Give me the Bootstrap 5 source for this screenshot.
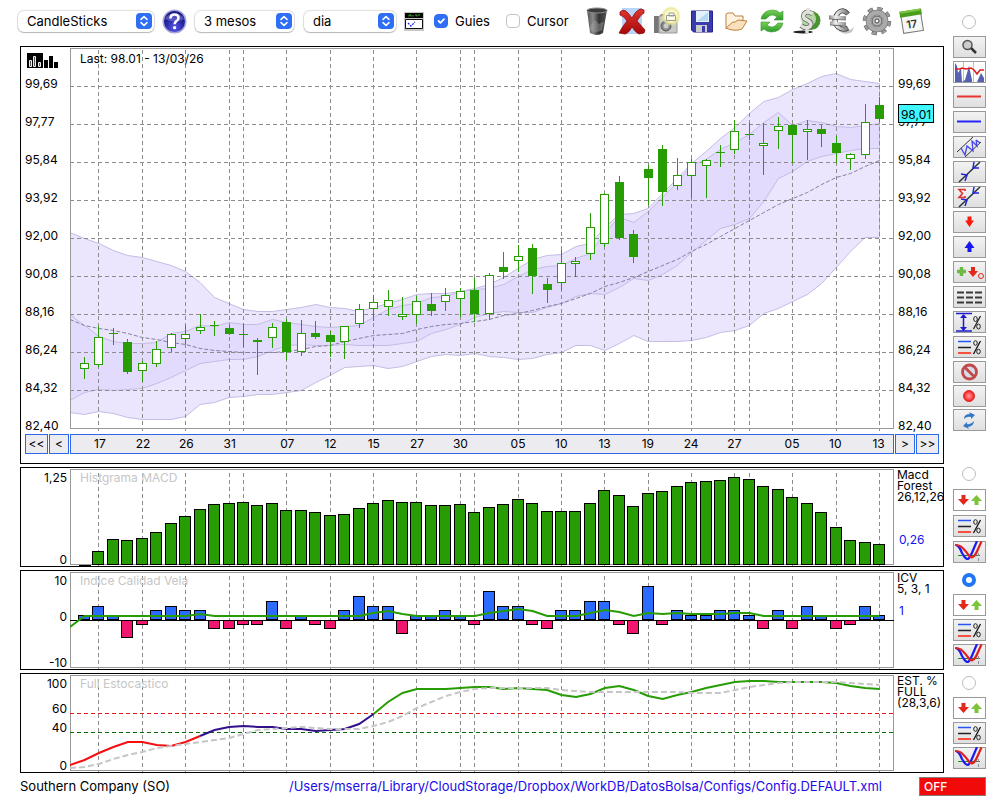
<!DOCTYPE html>
<html lang="ca">
<head>
<meta charset="utf-8">
<meta name="viewport" content="width=device-width, initial-scale=1">
<title>Southern Company (SO)</title>
<link href="https://cdn.jsdelivr.net/npm/bootstrap@5.3.0/dist/css/bootstrap.min.css" rel="stylesheet">
<style>
body{font-family:Inter,"Liberation Sans",sans-serif;font-size:12px;line-height:12px;color:#000;background:#fff}
.workspace{padding-left:20px}
.charts{gap:3px;min-width:0}
.toolbar{height:46px;padding-bottom:4px;margin-left:-2px;font-size:13px}
.picker{height:21px;padding:0 26px 0 9px;font-size:13px;line-height:16px;font-weight:400;color:#000;border:0;border-radius:6px;flex:none;
 box-shadow:0 0 1px 1px rgba(0,0,0,.13),0 1px 1px rgba(0,0,0,.18);
 background:#fff url("data:image/svg+xml,%3Csvg xmlns='http://www.w3.org/2000/svg' viewBox='0 0 16 16'%3E%3Crect width='16' height='16' rx='4' fill='%232f6ff5'/%3E%3Cpath d='M5 6.4L8 3.6l3 2.8M5 9.6l3 2.8 3-2.8' fill='none' stroke='white' stroke-width='1.5' stroke-linecap='round' stroke-linejoin='round'/%3E%3C/svg%3E") no-repeat right 2px center/16px 16px}
.pick-l{width:136px}.pick-m{width:99px}.pick-s{width:92px}
.flat{padding:0;border:0;line-height:0;border-radius:0;flex:none}
.flat svg{display:block}
.form-check-input.tick{width:14px;height:14px;margin:0;border-radius:4px;border-color:#c4c4c4}
.form-check-input.tick:checked{background-color:#2f6ff5;border-color:#2f6ff5}
.toolbar .toolbar-gap{margin-left:10px}
.toolbar label{padding-left:7px}
.actions{gap:3px;margin-left:12px}
.side{width:56px;padding-left:9px;flex:none}
.form-check-input.dot{width:14px;height:14px;margin:0 0 4px 9px;border-color:#bcbcbc}
.form-check-input.dot:checked{background:#fff;border:4px solid #2176f7}
.tools-main{height:467px;padding-top:15px;gap:3px}
.tools-sub{height:103px;padding-top:3px;gap:3px}
.tools-sub:last-child{height:auto}
.tools-first{padding-top:0;gap:4px}
.tight{gap:2px}
.tool{padding:0;border:0;border-radius:0;width:33px;height:22px;line-height:0;background:linear-gradient(#f4f4f4,#dedede);box-shadow:inset 0 0 0 1px #9a9a9a}
.tool.plain{background:#fff}
.tool svg{display:block;width:33px;height:22px}
.frame{border:1px solid #000;overflow:hidden}
.frame-main{padding:1px 0 9px}
.scale{width:49px;flex:none;white-space:nowrap}
.scale-price{padding:17px 0 0 4px;line-height:38px}
.scale-price div:last-child{height:24px}
.scale-sub{padding:4px 3px 0 0;text-align:right}
.plot{min-width:0}
.plot>svg{display:block;width:100%}
.plot-main>svg{height:383px}
.plot-sub>svg{height:98px}
.caption{left:10px;top:5px}
.plot-main .caption{color:#000}
.plot-sub .caption{color:#c6c6c6;top:4px}
.glyph{width:32px;height:15px;left:5px;top:5px}
.last-price{left:4px;top:56px;width:36px;height:19px;line-height:19px;background:#40f8ff;border:1px solid #000;text-align:center}
.y-icv .mid{margin-top:24px}
.y-est .hi{margin-top:13px}.y-est .lo{margin-top:7px}
.legend{padding:1px 0 0 3px;line-height:11px}
.reading{color:#1414f0;padding-left:2px;line-height:12px}
.reading-macd{margin-top:32px}.reading-icv{margin-top:11px}
.pager{margin-top:3px;height:20px}
.pager-side{width:49px;flex:none;gap:1px}
.pager-prev{padding-left:4px}.pager-next{padding-left:1px}
.cell{background:#ebebf0;border:1px solid #2f67e8;border-radius:0;padding:0;font-size:12px;line-height:18px;color:#000}
.cell-w{width:23px}.cell-n{width:20px}
.dates{display:grid;grid-template-columns:repeat(114,minmax(0,1fr));align-items:center}
.dates span{display:flex;justify-content:center;white-space:nowrap}
.status{padding:3px 14px 0 20px;font-size:13px;line-height:20px}
.status a{color:#1c0cea;text-decoration:none;margin-right:37px}
.switch-off{width:67px;height:19px;background:#f10a0a;border:1px solid #8b7b7b;border-radius:0;color:#fff;padding:0 4px;font-size:12px;line-height:17px;font-weight:500;text-align:left}
</style>
</head>
<body>
<svg width="0" height="0" class="position-absolute" aria-hidden="true">
 <defs>
  <linearGradient id="metal" x1="0" x2="1"><stop offset="0" stop-color="#888"/><stop offset=".35" stop-color="#eee"/><stop offset="1" stop-color="#777"/></linearGradient>
  <linearGradient id="bin" x1="0" x2="1"><stop offset="0" stop-color="#555"/><stop offset=".3" stop-color="#8a8a8a"/><stop offset=".6" stop-color="#333"/><stop offset="1" stop-color="#555"/></linearGradient>
  <linearGradient id="redg" x1="0" y1="0" x2="0" y2="1"><stop offset="0" stop-color="#e0352f"/><stop offset="1" stop-color="#a50808"/></linearGradient>
  <linearGradient id="greeng" x1="0" y1="0" x2="0" y2="1"><stop offset="0" stop-color="#7ad052"/><stop offset="1" stop-color="#2d9b2d"/></linearGradient>
  <radialGradient id="orb" cx=".5" cy=".8" r=".8"><stop offset="0" stop-color="#5a5ae8"/><stop offset=".6" stop-color="#22229c"/><stop offset="1" stop-color="#15157a"/></radialGradient>
  <radialGradient id="glow"><stop offset="0" stop-color="#fff"/><stop offset=".55" stop-color="#fbf9c8"/><stop offset=".8" stop-color="#e8e48c" stop-opacity=".8"/><stop offset="1" stop-color="#f4f0a0" stop-opacity="0"/></radialGradient>
  <radialGradient id="led"><stop offset="0" stop-color="#ff9a9a"/><stop offset=".6" stop-color="#ff5050"/><stop offset="1" stop-color="#e01010"/></radialGradient>
 </defs>
 <symbol id="i-updown" viewBox="0 0 33 22"><path d="M8.500 6h4v4h3.500l-5.500 6-5.500-6h3.500z" fill="#e12a1c"/><path d="M21.500 16h4v-4h3.500l-5.500-6-5.500 6h3.500z" fill="#7cc43c"/></symbol>
 <symbol id="i-pct" viewBox="0 0 33 22"><path d="M5 5.500h13" stroke="#2456f5" stroke-width="1.500"/><path d="M5 11.500h13" stroke="#222" stroke-width="1.500"/><path d="M5 17h13" stroke="#f4503c" stroke-width="2"/><path d="M27.500 5L20.500 18" stroke="#111" stroke-width="1.300"/><ellipse cx="22.500" cy="7" rx="1.800" ry="2.300" fill="none" stroke="#222"/><ellipse cx="25.500" cy="15.500" rx="1.800" ry="2.300" fill="none" stroke="#222"/></symbol>
 <symbol id="i-cross" viewBox="0 0 33 22"><path d="M5 14.500h24" stroke="#278a1c" stroke-dasharray="4 2"/><path d="M25.500 12v9" stroke="#8892a5" stroke-dasharray="3 2"/><path d="M3 4c3 1 4 3 6 8 2 3 3 6 6 6 2-1 4-6 6-11l3-7" fill="none" stroke="#1c1cf0" stroke-width="2.200"/><path d="M2 4c5 0 7 2 10 5.500 3 3 4 7 7 7 4-1 5-7 9.500-16" fill="none" stroke="#df2020" stroke-width="2.200"/></symbol>
</svg>

<div class="d-flex workspace">
 <main class="flex-grow-1 d-flex flex-column charts">
  <div class="d-flex flex-column">
  <header class="toolbar d-flex align-items-center">
   <select class="form-select picker pick-l" aria-label="Tipus de gràfic"><option>CandleSticks</option></select>
   <button class="btn flat ms-2" aria-label="Ajuda"><svg width="25" height="25"><circle cx="12.500" cy="12.500" r="12" fill="#a3a3dd"/><circle cx="12.500" cy="12.500" r="10.500" fill="url(#orb)"/><path d="M3 10a10 8 0 0 1 19 0q-9 5-19 0z" fill="#8585df" opacity=".5"/><path d="M8.500 9.500q0-4 4-4t4 3.500q0 2-2.400 3.300-1.400.9-1.400 3" fill="none" stroke="#fff" stroke-width="2.600"/><circle cx="12.600" cy="18.700" r="1.600" fill="#fff"/></svg></button>
   <select class="form-select picker pick-m ms-2" aria-label="Període"><option>3 mesos</option></select>
   <select class="form-select picker pick-s toolbar-gap" aria-label="Interval"><option>dia</option></select>
   <button class="btn flat ms-2" aria-label="Indicadors"><svg width="20" height="19"><path d="M0 0h20v19H0z" fill="#c9c9c9"/><path d="M1 1h18v5H1z" fill="#060606"/><path d="M5 4.500V3h2v1.500M9 4.500V3M11 3h2v1.500M14 3h2" stroke="#38b52a" fill="none"/><path d="M1.500 7.500h17v9h-17z" fill="#fff" stroke="#111"/><path d="M4 11l3 3 4-4" fill="none" stroke="#2020e0" stroke-width="1.300" stroke-dasharray="2 1"/></svg></button>
   <input class="form-check-input tick flex-shrink-0 toolbar-gap" type="checkbox" id="guies" checked><label for="guies" class="pe-3">Guies</label>
   <input class="form-check-input tick flex-shrink-0" type="checkbox" id="cursor"><label for="cursor">Cursor</label>
   <div class="actions d-flex align-items-center">
    <button class="btn flat" aria-label="Esborra"><svg width="32" height="30"><path d="M6 4l3 23q7 4 13 0l4-23z" fill="url(#bin)"/><ellipse cx="16" cy="4.500" rx="10" ry="2.500" fill="#3c3c3c" stroke="#8a8a8a"/><path d="M9 20l5-6 4 4 5-3-2 9q-6 4-12 0z" fill="#aaa" opacity=".4"/></svg></button>
    <button class="btn flat" aria-label="Elimina"><svg width="32" height="30"><path d="M6 2h20v26H6z" fill="#b8d4f8"/><path d="M4 6q4-4 8 1l4 5q4-8 9-9l3 1v3q-4 2-7 8l8 9-1 3-5 1q-3-1-7-7-4 7-7 7l-6-1q3-6 8-12-3-5-7-6z" fill="url(#redg)" stroke="#8e0d0d" stroke-width=".8"/></svg></button>
    <button class="btn flat" aria-label="Captura"><svg width="32" height="30"><path d="M3 10h6l1-2h5v19H3z" fill="#777"/><path d="M8 10h18v17H8z" fill="#c9c9c4" stroke="#999"/><circle cx="15" cy="20" r="5" fill="#8a8a8a" stroke="#555"/><circle cx="15" cy="20" r="2.500" fill="#ccc"/><circle cx="20" cy="10" r="10" fill="url(#glow)"/><path d="M15.500 9.500h9v5h-9zM18 7h5v3h-5z" fill="none" stroke="#999"/></svg></button>
    <button class="btn flat" aria-label="Desa"><svg width="32" height="30"><path d="M5.500 5h21v21h-19l-2-2z" fill="#3b3bb0" stroke="#22228a"/><path d="M10 5h13v11H10z" fill="#e2f1fc"/><path d="M11 15L22 6v9z" fill="#b5d9f5"/><path d="M10 19h11v7H10z" fill="#ccc"/><path d="M16 20h3v6h-3z" fill="#3b3bb0"/></svg></button>
    <button class="btn flat" aria-label="Obre"><svg width="32" height="30"><path d="M5 23V9q0-2 2-2h5l2 3h8v5" fill="#fff3e0" stroke="#bd8140"/><path d="M5 22l7-6q2 1 5-2l9 1-5 8q-8 3-16-1z" fill="#fbe0bd" stroke="#bd8140"/></svg></button>
    <button class="btn flat" aria-label="Actualitza"><svg width="32" height="30"><path d="M5 13q2-9 12-9 4 0 7 3l3-2v9h-9l3-3q-5-4-9 0-1 1-2 2z" fill="url(#greeng)" stroke="#369a30" stroke-width=".6"/><path d="M27 17q-2 9-12 9-4 0-7-3l-3 2v-9h9l-3 3q5 4 9 0l2-2z" fill="url(#greeng)" stroke="#369a30" stroke-width=".6"/></svg></button>
    <button class="btn flat" aria-label="Dòlar"><svg width="32" height="30"><ellipse cx="12" cy="26" rx="10" ry="1.500" fill="#222"/><circle cx="20" cy="14.500" r="9.500" fill="#48942f"/><circle cx="17" cy="13" r="8" fill="#e6f1dc" opacity=".7"/><path d="M22 8q-6-4-9 0-2 4 3 6 6 3 3 6.500-4 3-9-1" fill="none" stroke="#666" stroke-width="5"/><path d="M22 8q-6-4-9 0-2 4 3 6 6 3 3 6.500-4 3-9-1M17 2v4M16 23v4" fill="none" stroke="#dfe3da" stroke-width="3.500"/></svg></button>
    <button class="btn flat" aria-label="Euro"><svg width="32" height="30"><path d="M13 23q8 5 15-2l-2 5q-7 4-13-1z" fill="#c4c4c4"/><path d="M22 8q-5-6-10-1-6 8 0 14 5 4 10 1" fill="none" stroke="#444" stroke-width="5"/><path d="M22 8q-5-6-10-1-6 8 0 14 5 4 10 1M3 11l17 1M4 17l16 1" fill="none" stroke="url(#metal)" stroke-width="3.500"/><path d="M3 13l17 1M4 19l16 1" stroke="#555" stroke-width=".8"/></svg></button>
    <button class="btn flat" aria-label="Configuració"><svg width="32" height="32"><circle cx="16" cy="16" r="12" fill="none" stroke="#666" stroke-width="4.500" stroke-dasharray="5 4.420"/><circle cx="16" cy="16" r="12" fill="none" stroke="#9b9b9b" stroke-width="3.500" stroke-dasharray="4 5.420" stroke-dashoffset="-.5"/><circle cx="16" cy="16" r="8.500" fill="none" stroke="#666" stroke-width="5.500"/><circle cx="16" cy="16" r="8.500" fill="none" stroke="#aaa" stroke-width="4.500"/><circle cx="16" cy="16" r="5" fill="#b8b8b8" stroke="#555"/><circle cx="16" cy="16" r="2" fill="#fff" stroke="#444"/></svg></button>
    <button class="btn flat" aria-label="Calendari"><svg width="32" height="30"><g transform="rotate(-9 16 16)"><path d="M6 6h20v20H6z" fill="#f7f7f7" stroke="#777"/><path d="M5 4h22v6H5z" fill="#4a9c1e"/><path d="M6 4h20v2H6z" fill="#79c840"/><text x="10" y="22" font-size="11" font-weight="600" fill="#333">17</text></g></svg></button>
   </div>
  </header>

  <section class="frame frame-main">
   <div class="d-flex">
    <div class="scale scale-price position-relative" data-prices>
     <svg class="glyph position-absolute" viewBox="0 0 32 15"><path d="M1 0h16v15H1z"/><path d="M3.500 7.500h2v6h-2zM7.500 3.500h2v10h-2zM12.500 9.500h2v4h-2z" fill="#555" stroke="#eee"/><path d="M18 7h4v8h-4zM23 3h4v12h-4zM28 9h4v6h-4z"/></svg>
    </div>
    <div class="plot plot-main flex-grow-1 position-relative"><svg id="price" viewBox="0 48 824 383" preserveAspectRatio="none"></svg><div class="caption position-absolute">Last: 98.01 - 13/03/26</div></div>
    <div class="scale scale-price position-relative" data-prices><div class="last-price position-absolute">98,01</div></div>
   </div>
   <nav class="d-flex pager" aria-label="Dates">
    <div class="pager-side pager-prev d-flex"><button class="btn cell cell-w">&lt;&lt;</button><button class="btn cell cell-n">&lt;</button></div>
    <div class="cell dates flex-grow-1" id="dates"></div>
    <div class="pager-side pager-next d-flex"><button class="btn cell cell-n">&gt;</button><button class="btn cell cell-w">&gt;&gt;</button></div>
   </nav>
  </section>
  </div>

  <section class="frame d-flex">
   <div class="scale scale-sub d-flex flex-column"><span>1,25</span><span class="mt-auto">0</span></div>
   <div class="plot plot-sub flex-grow-1 position-relative"><svg id="macd" viewBox="0 468 824 98" preserveAspectRatio="none"></svg><div class="caption position-absolute">Histgrama MACD</div></div>
   <div class="scale legend">Macd<br>Forest<br>26,12,26<div class="reading reading-macd">0,26</div></div>
  </section>
  <section class="frame d-flex">
   <div class="scale scale-sub y-icv d-flex flex-column"><span>10</span><span class="mid">0</span><span class="mt-auto">-10</span></div>
   <div class="plot plot-sub flex-grow-1 position-relative"><svg id="icv" viewBox="0 571 824 98" preserveAspectRatio="none"></svg><div class="caption position-absolute">Indice Calidad Vela</div></div>
   <div class="scale legend">ICV<br>5, 3, 1<div class="reading reading-icv">1</div></div>
  </section>
  <section class="frame d-flex">
   <div class="scale scale-sub y-est d-flex flex-column"><span>100</span><span class="hi">60</span><span class="lo">40</span><span class="mt-auto">0</span></div>
   <div class="plot plot-sub flex-grow-1 position-relative"><svg id="est" viewBox="0 674 824 98" preserveAspectRatio="none"></svg><div class="caption position-absolute">Full Estocastico</div></div>
   <div class="scale legend">EST. %<br>FULL<br>(28,3,6)</div>
  </section>
 </main>

 <aside class="side d-flex flex-column">
  <div class="tools-main d-flex flex-column">
   <input class="form-check-input dot" type="radio" name="pane" aria-label="Preu">
   <button class="btn tool" aria-label="Zoom"><svg><circle cx="14.500" cy="9" r="4.500" fill="#ccc" stroke="#555" stroke-width="1.500"/><path d="M18 12l5 5" stroke="#333" stroke-width="2.500"/></svg></button>
   <button class="btn tool plain" aria-label="Volum"><svg><path d="M10.500 1v20M20.500 1v20" stroke="#b8bfe6"/><path d="M2 21V2l2 3 1 7 3-5 1 14 3-2 4-14 3 14v2h5l4-9 3 5v4z" fill="#5560b0"/><path d="M2 8h5l2-1 4 1 5-1 3 2 3 4 3-4h4" fill="none" stroke="#e01b1b" stroke-width="1.500"/></svg></button>
   <button class="btn tool" aria-label="Línia vermella"><svg><path d="M4 10.500h24" stroke="#ea3434" stroke-width="2"/></svg></button>
   <button class="btn tool" aria-label="Línia blava"><svg><path d="M4 10.500h24" stroke="#2626f4" stroke-width="2"/></svg></button>
   <button class="btn tool" aria-label="Canal"><svg><path d="M4 16L20 1M12 21L28 6" stroke="#333"/><path d="M8 12l4 7 2-9 6 5-1-10 5 5-1-6M23 4l4 3" fill="none" stroke="#4646e8" stroke-width="1.300"/></svg></button>
   <button class="btn tool" aria-label="Tendència"><svg><path d="M6 21L27 1" stroke="#2c3a3a" stroke-width="1.600"/><path d="M8 13l6 1-2 6M21 1l-1 6 6 0" fill="none" stroke="#2424d8" stroke-width="1.500"/></svg></button>
   <button class="btn tool" aria-label="Regressió"><svg><path d="M6 21L27 1" stroke="#2c3a3a" stroke-width="1.600"/><path d="M8 13l6 1-2 6M21 1l-1 6 6 0" fill="none" stroke="#2424d8" stroke-width="1.500"/><path d="M12 5V3.500H6l3.500 4L6 11.500h6V10" fill="none" stroke="#e03030" stroke-width="1.600"/></svg></button>
   <button class="btn tool" aria-label="Venda"><svg><path d="M14.500 5.500h4v4h2.500L16.500 16 12 9.500h2.500z" fill="#fb1a0a"/></svg></button>
   <button class="btn tool" aria-label="Compra"><svg><path d="M14.500 16h4v-4h3l-5-7-5 7h3z" fill="#1717f3"/></svg></button>
   <button class="btn tool" aria-label="Senyals"><svg><path d="M8.500 6v9M4 10.500h9" stroke="#6cb944" stroke-width="3.500"/><path d="M18 6h4v4h3l-5 6-5-6h3z" fill="#e5281c"/><circle cx="28" cy="15" r="2.500" fill="none" stroke="#e5281c"/></svg></button>
   <button class="btn tool" aria-label="Nivells"><svg><path d="M4 6.500h25M4 11.500h25M4 16.500h25" stroke="#3a3a3a" stroke-width="2" stroke-dasharray="7 2"/></svg></button>
   <button class="btn tool" aria-label="Rang"><svg><path d="M3 2.500h16M3 20h16M10.500 4v15" stroke="#1c1ccc" stroke-width="1.500"/><path d="M10.500 3l3.500 4H7zM10.500 20l3.500-4H7z" fill="#1c1ccc"/><path d="M27.500 5l-7 13" stroke="#222" stroke-width="1.300"/><ellipse cx="22.500" cy="8" rx="1.800" ry="2.500" fill="none" stroke="#222"/><ellipse cx="25.500" cy="15.500" rx="1.800" ry="2.500" fill="none" stroke="#222"/></svg></button>
   <button class="btn tool" aria-label="Percentatge"><svg><use href="#i-pct"/></svg></button>
   <div class="d-flex flex-column tight">
    <button class="btn tool" aria-label="Prohibit"><svg><circle cx="16.500" cy="11" r="7" fill="#d8dce8" stroke="#c14a4a" stroke-width="2.800"/><path d="M11.500 6l10 10" stroke="#c14a4a" stroke-width="2.800"/></svg></button>
    <button class="btn tool" aria-label="Enregistra"><svg><circle cx="16" cy="11" r="5.500" fill="url(#led)" stroke="#e43030"/></svg></button>
    <button class="btn tool" aria-label="Refresca"><svg><path d="M11 10q0-5 6-5l-1-2 6 3-4 4v-2q-4-1-7 2zM21 12q0 5-6 6l1 2-6-3 4-4v2q4 1 7-3z" fill="#3478c8"/></svg></button>
   </div>
  </div>
  <div class="tools-sub tools-first d-flex flex-column">
   <input class="form-check-input dot" type="radio" name="pane" aria-label="MACD">
   <button class="btn tool plain" aria-label="Senyals MACD"><svg><use href="#i-updown"/></svg></button>
   <button class="btn tool" aria-label="Nivells MACD"><svg><use href="#i-pct"/></svg></button>
   <button class="btn tool" aria-label="Creuaments MACD"><svg><use href="#i-cross"/></svg></button>
  </div>
  <div class="tools-sub d-flex flex-column">
   <input class="form-check-input dot" type="radio" name="pane" aria-label="ICV" checked>
   <button class="btn tool plain" aria-label="Senyals ICV"><svg><use href="#i-updown"/></svg></button>
   <button class="btn tool" aria-label="Nivells ICV"><svg><use href="#i-pct"/></svg></button>
   <button class="btn tool" aria-label="Creuaments ICV"><svg><use href="#i-cross"/></svg></button>
  </div>
  <div class="tools-sub d-flex flex-column">
   <input class="form-check-input dot" type="radio" name="pane" aria-label="Estocàstic">
   <button class="btn tool plain" aria-label="Senyals estocàstic"><svg><use href="#i-updown"/></svg></button>
   <button class="btn tool" aria-label="Nivells estocàstic"><svg><use href="#i-pct"/></svg></button>
   <button class="btn tool" aria-label="Creuaments estocàstic"><svg><use href="#i-cross"/></svg></button>
  </div>
 </aside>
</div>
<footer class="status d-flex align-items-center">
 <span>Southern Company (SO)</span>
 <a href="#" class="ms-auto">/Users/mserra/Library/CloudStorage/Dropbox/WorkDB/DatosBolsa/Configs/Config.DEFAULT.xml</a>
 <button class="btn switch-off">OFF</button>
</footer>

<script src="https://cdn.jsdelivr.net/npm/bootstrap@5.3.0/dist/js/bootstrap.bundle.min.js"></script>
<script>
// Session i sits on the (i+1)th of 57 equal steps across the plot.
const X = i => (i + 1) * 824 / 57, PX = i => Math.floor(X(i)) + .5;
const guides = [1,4,7,10,11,14,17,20,23,26,27,30,33,36,39,42,45,46,49,52,55];
const dates = {1:'17',4:'22',7:'26',10:'31',14:'07',17:'12',20:'15',23:'27',26:'30',30:'05',33:'10',36:'13',39:'19',42:'24',45:'27',49:'05',52:'10',55:'13'};
const ticks = ['99,69','97,77','95,84','93,92','92,00','90,08','88,16','86,24','84,32','82,40'];
const line = (x1,y1,x2,y2,s,extra='') => `<line x1="${x1}" y1="${y1}" x2="${x2}" y2="${y2}" stroke="${s}" ${extra}/>`;
const rect = (x,y,w,h,f,s) => `<rect x="${x}" y="${y}" width="${w}" height="${h}" fill="${f}" stroke="${s}"/>`;
const pts = (a, from=-1) => a.map((y,k) => X(k+from).toFixed(1) + ',' + (y + .5)).join(' ');
const poly = (a,s,w,extra='',from=-1) => `<polyline points="${pts(a,from)}" fill="none" stroke="${s}" stroke-width="${w}" ${extra}/>`;
const grid = (top,bottom) => guides.map(i => line(PX(i),top,PX(i),bottom,'#8c8c8c','stroke-dasharray="4 3"')).join('');
const crisp = s => `<g shape-rendering="crispEdges">${s}</g>`;
const box = (t,b) => rect(.5,t+.5,823,b-t,'none','#999');
const put = (id,s) => document.getElementById(id).innerHTML = s;

document.querySelectorAll('[data-prices]').forEach(c => c.insertAdjacentHTML('beforeend', ticks.map(t => `<div>${t}</div>`).join('')));
put('dates', Object.entries(dates).map(([i,d]) => `<span style="grid-column:${2*i+2}/span 2;grid-row:1">${d}</span>`).join(''));

const outUp=[232,238,243,250,255,257,261,265,271,282,297,303,309,311,311,309,307,304,307,308,311,307,303,299,294,293,293,291,288,284,277,268,259,255,254,246,243,227,214,213,208,193,178,163,151,138,127,113,101,97,89,83,76,73,79,81,83];
const outLo=[412,414,411,413,417,419,419,419,416,404,402,397,396,394,394,392,390,382,375,367,366,365,368,366,361,356,354,355,353,356,357,359,358,354,352,345,345,350,343,335,341,341,341,340,337,332,330,325,313,308,301,294,283,267,251,237,237];
const inUp=[314,325,336,341,343,343,342,333,331,325,326,322,324,324,319,322,324,326,327,326,325,317,309,305,303,297,296,291,289,288,284,276,269,266,265,258,253,232,217,222,211,197,182,165,159,149,142,134,122,112,125,120,122,126,127,125,123];
const inLo=[400,392,389,390,389,388,383,377,370,363,361,359,359,356,350,345,344,345,345,344,345,345,345,343,341,333,329,324,317,313,311,312,312,307,303,296,293,294,287,278,280,274,265,252,240,228,224,218,201,178,171,161,156,153,150,148,148];
const mean=[319,325,328,330,333,337,339,342,344,348,350,351,352,352,352,351,349,346,345,341,338,335,334,333,329,326,324,323,321,319,315,313,310,306,303,298,293,286,282,277,271,265,259,251,244,236,228,220,212,204,198,192,184,177,173,166,160];
// wick top, body top, body bottom, wick bottom, filled
const candles=[[357,363,368,378,0],[326,337,364,366,0],[328,333,333,344,0],[339,342,371,373,1],[361,363,370,381,0],[341,349,363,366,0],[333,334,347,351,0],[325,334,338,343,0],[314,327,330,333,0],[321,325,325,335,0],[325,328,333,334,1],[324,334,334,346,0],[338,340,341,374,1],[323,327,337,347,0],[319,322,351,359,1],[320,333,351,355,0],[321,333,336,338,1],[331,335,341,356,1],[326,326,341,358,0],[304,309,323,327,0],[295,302,308,320,0],[290,300,306,315,0],[297,314,316,319,0],[296,301,314,323,0],[293,304,310,315,1],[288,295,301,310,0],[288,291,298,316,0],[278,290,313,321,1],[273,275,313,319,0],[252,267,271,278,1],[245,256,260,271,0],[244,248,275,293,1],[278,284,289,302,1],[250,263,282,289,0],[257,261,263,276,0],[213,227,253,259,0],[193,194,243,246,0],[176,182,237,239,1],[230,234,256,262,1],[165,169,177,204,1],[145,149,191,205,1],[158,175,185,189,0],[159,162,175,197,0],[159,160,165,197,0],[145,152,152,166,0],[120,131,149,153,0],[123,134,134,139,0],[123,143,145,174,0],[117,126,130,148,0],[125,125,134,162,1],[120,129,131,159,0],[125,129,133,146,1],[136,143,152,162,1],[153,154,158,169,0],[104,122,154,158,0],[97,105,118,121,1]];
const G='#279c04', band = (u,l,f) => `<polygon points="${pts(u)} ${pts(l).split(' ').reverse().join(' ')}" fill="${f}" stroke="#c3bde4"/>`;
put('price', band(outUp,outLo,'#ebe6fe') + band(inUp,inLo,'#e3dbfd')
 + crisp(grid(50,431) + [86,124,162,200,238,276,314,352,390].map(y => line(0,y+.5,824,y+.5,'#8c8c8c','stroke-dasharray="4 3"')).join('') + box(48,428))
 + poly(mean,'#85809f',1,'stroke-dasharray="4 2"')
 + crisp(candles.map(([h,t,b,l,f],i) => { const x=PX(i); return line(x,h,x,l+1,G) + (t===b ? line(x-4.5,t+.5,x+4.5,t+.5,G) : rect(x-4,t+.5,8,b-t,f?G:'#fff',G)); }).join('')));

const macd=[565,551,539,540,538,532,523,516,509,504,503,502,505,503,510,510,512,515,514,508,503,500,502,502,505,505,504,512,507,504,499,503,511,511,511,503,490,495,506,493,491,486,482,481,480,477,479,486,489,497,503,512,527,540,542,544];
put('macd', crisp(grid(473,566) + box(469,564) + macd.map((y,i) => y>564 ? line(PX(i)-6,565.5,PX(i)+6,565.5,'#000') : rect(PX(i)-6,y+.5,11,564-y,G,'#000')).join('')));

const icv=[1,3,1,-4,-1,2,3,2,2,-2,-2,-1,-1,4,-2,1,-1,-2,2,5,3,3,-3,1,1,2,1,-1,6,3,3,-1,-2,2,2,4,4,-1,-3,7,-1,2,1,1,2,2,1,-2,2,-2,3,1,-2,-1,3,1];
const bump={'-1':627,8:614,20:613,21:611,22:614,28:613,29:611,30:609,31:611,35:613,36:610,37:612,39:613,40:614,41:613,42:614,43:614,44:614,45:613,46:613};
put('icv', crisp(grid(576,669) + box(572,667) + icv.map((v,i) => v>0 ? rect(PX(i)-6,Math.round(620-4.8*v)+.5,11,Math.round(4.8*v)-1,'#2b6bff','#000') : rect(PX(i)-6,620.5,11,Math.round(-4.5*v-.6),'#f0156f','#000')).join('') + line(0,620.5,824,620.5,'#000'))
 + poly(Array.from({length:57},(_,k) => (bump[k-1] ?? 616) - .5),'#279c04',2));

const k=[765,760,753,747,742,742,745,746,742,736,730,727,726,727,727,729,729,731,730,729,724,714,702,693,689,689,689,688,687,687,689,688,689,690,695,697,694,688,686,690,696,699,695,692,688,685,682,681,681,682,682,682,682,683,686,688,689].map(y=>y-.5);
const d=[768,767,764,759,755,752,748,746,744,742,740,738,734,730,729,728,727,728,729,729,729,726,722,716,708,702,696,692,689,688,688,688,688,688,690,691,692,692,692,692,692,692,692,693,693,693,690,687,685,683,682,682,682,682,683,684,685].map(y=>y-.5);
put('est', crisp(grid(679,772) + box(675,770) + line(0,713.5,824,713.5,'#e01818','stroke-dasharray="4 3"') + line(0,732.5,824,732.5,'#0b6b0b','stroke-dasharray="4 3"'))
 + poly(k.slice(0,10),'#f50f0f',2) + poly(k.slice(9,22),'#32108a',2,'',8) + poly(k.slice(21),'#279c04',2,'',20)
 + poly(d,'#c6c6c6',2,'stroke-dasharray="6 3"'));
</script>
</body>
</html>
